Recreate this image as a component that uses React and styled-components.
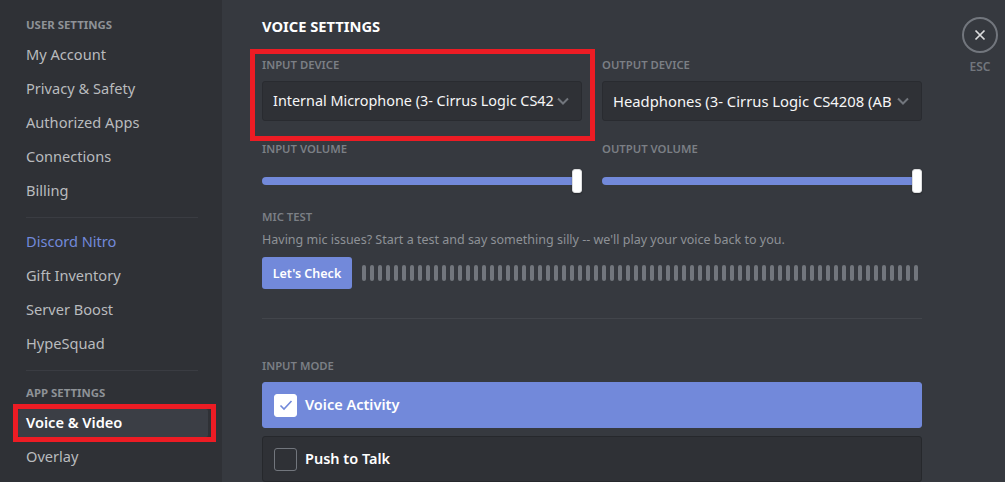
import styled, { createGlobalStyle } from "styled-components"

const GlobalStyle = createGlobalStyle`
html, body {
    margin: 0;
    height: 482px;
    overflow: hidden;
    background: #36393f;
}
* {
    box-sizing: border-box;
}
`

const Page = styled.div`
position: relative;
display: flex;
width: 1005px;
height: 482px;
overflow: hidden;
font-family: "Noto Sans", "Open Sans", sans-serif;
background: #36393f;
`

// sidebar
const Sidebar = styled.nav`
flex: 0 0 222px;
height: 482px;
padding: 18px 14px 0 18px;
background: #2f3136;
`
const SideHeading = styled.div`
height: 14px;
padding-left: 8px;
margin-bottom: 9px;
font-size: 11.4px;
line-height: 14px;
font-weight: 700;
text-transform: uppercase;
color: #8e9297;
`
const SideItem = styled.div`
height: 28px;
padding-left: 8px;
margin-bottom: 6px;
font-size: 14.6px;
line-height: 26px;
border-radius: 2px;
font-weight: ${props => props.$active ? 600 : 400};
color: ${props => props.$active ? "#ffffff" : props.$accent ? "#7289da" : "#b9bbbe"};
background: ${props => props.$active ? "#3b3e45" : "transparent"};
`
const SideDivider = styled.div`
height: 1px;
margin: 12px 10px ${props => props.$gap}px 8px;
background: #3a3c42;
`

// main column
const Main = styled.main`
flex: 0 0 660px;
margin-left: 40px;
padding-top: 17px;
`
const Title = styled.h2`
margin: 0 0 23px;
font-size: 14.7px;
line-height: 18px;
font-weight: 700;
text-transform: uppercase;
color: #ffffff;
`
const Columns = styled.div`
display: grid;
grid-template-columns: 320px 320px;
column-gap: 20px;
`
const Label = styled.div`
height: 14px;
margin-bottom: 9px;
font-size: 11.3px;
line-height: 14px;
font-weight: 600;
text-transform: uppercase;
color: #7b7f85;
`
const Select = styled.div`
display: flex;
align-items: center;
height: 40px;
padding: 0 11px 1px 10px;
margin-bottom: 21px;
border: 1px solid #292b30;
border-radius: 3px;
background: #2f3136;
`
const SelectText = styled.span`
flex: 1;
min-width: 0;
white-space: nowrap;
font-size: ${props => props.$size}px;
color: #f6f6f7;
`
const Chevron = styled.svg`
flex: 0 0 14px;
margin-left: 3px;
fill: none;
stroke: #72767d;
stroke-width: 2;
`
const Slider = styled.div`
position: relative;
height: 8px;
margin: 21px 0 25px;
border-radius: 4px;
background: #7289da;
`
const Handle = styled.div`
position: absolute;
right: 0;
top: -8px;
width: 10px;
height: 24px;
border-radius: 3px;
border: 1px solid #dcddde;
background: #ffffff;
box-shadow: 0 1px 2px rgba(0, 0, 0, .3);
`
const Description = styled.div`
height: 20px;
margin: -3px 0 7px;
font-size: 12.5px;
line-height: 20px;
white-space: nowrap;
color: #8e9297;
`
const TestRow = styled.div`
display: flex;
align-items: center;
gap: 10px;
`
const CheckButton = styled.div`
flex: 0 0 90px;
height: 32px;
border-radius: 3px;
text-align: center;
font-size: 12.5px;
line-height: 33px;
font-weight: 600;
color: #ffffff;
background: #7289da;
`
const Meter = styled.div`
display: flex;
gap: 4px;
`
const MeterBar = styled.div`
width: 4px;
height: 16px;
border-radius: 2px;
background: #72767d;
`
const Divider = styled.div`
height: 1px;
margin: 29px 0 40px;
background: #42454b;
`
const Radio = styled.div`
display: flex;
align-items: center;
gap: 8px;
height: 46px;
padding-left: 11px;
margin-bottom: 8px;
border-radius: 3px;
border: 1px solid ${props => props.$checked ? "#7289da" : "#26282c"};
background: ${props => props.$checked ? "#7289da" : "#2f3136"};
`
const RadioText = styled.span`
margin-top: -2px;
font-size: 14.5px;
font-weight: 600;
color: #ffffff;
`
const Box = styled.div`
display: flex;
align-items: center;
justify-content: center;
width: 23px;
height: 23px;
border-radius: 3px;
border: 1px solid ${props => props.$checked ? "#ffffff" : "#72767d"};
background: ${props => props.$checked ? "#ffffff" : "transparent"};
`

// esc button
const Tools = styled.div`
display: flex;
flex-direction: column;
align-items: center;
width: 36px;
margin-left: 40px;
padding-top: 17px;
`
const Close = styled.div`
display: flex;
align-items: center;
justify-content: center;
flex: 0 0 36px;
width: 36px;
height: 36px;
border-radius: 50%;
border: 2px solid #72767d;
`
const Esc = styled.div`
margin-top: 7px;
font-size: 12px;
line-height: 14px;
font-weight: 600;
color: #72767d;
`

// red marks drawn over the screenshot
const Mark = styled.div`
position: absolute;
left: ${props => props.$left}px;
top: ${props => props.$top}px;
width: ${props => props.$width}px;
height: ${props => props.$height}px;
border: 5px solid #ed1c24;
`

const userItems = ["My Account", "Privacy & Safety", "Authorized Apps", "Connections", "Billing"]
const otherItems = ["Gift Inventory", "Server Boost", "HypeSquad"]
const bars = Array.from({ length: 70 }, (_, i) => i)

const ChevronIcon = () => (
    <Chevron width="14" height="14" viewBox="0 0 14 14">
        <path d="M2 4.5l5 5 5-5" />
    </Chevron>
)

const App = () => {
    return (
        <Page>
            <GlobalStyle />
            <Sidebar>
                <SideHeading>User Settings</SideHeading>
                {userItems.map(item => <SideItem key={item}>{item}</SideItem>)}
                <SideDivider $gap={10} />
                <SideItem $accent>Discord Nitro</SideItem>
                {otherItems.map(item => <SideItem key={item}>{item}</SideItem>)}
                <SideDivider $gap={15} />
                <SideHeading>App Settings</SideHeading>
                <SideItem $active>Voice &amp; Video</SideItem>
                <SideItem>Overlay</SideItem>
            </Sidebar>
            <Main>
                <Title>Voice Settings</Title>
                <Columns>
                    <div>
                        <Label>Input Device</Label>
                        <Select>
                            <SelectText $size={14.4}>Internal Microphone (3- Cirrus Logic CS42</SelectText>
                            <ChevronIcon />
                        </Select>
                        <Label>Input Volume</Label>
                        <Slider><Handle /></Slider>
                    </div>
                    <div>
                        <Label>Output Device</Label>
                        <Select>
                            <SelectText $size={14.8}>Headphones (3- Cirrus Logic CS4208 (AB</SelectText>
                            <ChevronIcon />
                        </Select>
                        <Label>Output Volume</Label>
                        <Slider><Handle /></Slider>
                    </div>
                </Columns>
                <Label>Mic Test</Label>
                <Description>Having mic issues? Start a test and say something silly -- we'll play your voice back to you.</Description>
                <TestRow>
                    <CheckButton>Let's Check</CheckButton>
                    <Meter>
                        {bars.map(i => <MeterBar key={i} />)}
                    </Meter>
                </TestRow>
                <Divider />
                <Label>Input Mode</Label>
                <Radio $checked>
                    <Box $checked>
                        <svg width="16" height="16" viewBox="0 0 16 16" fill="none" stroke="#7289da" strokeWidth="1.6">
                            <path d="M2.5 8.5l3.5 3.5 7.5-8" />
                        </svg>
                    </Box>
                    <RadioText>Voice Activity</RadioText>
                </Radio>
                <Radio>
                    <Box />
                    <RadioText>Push to Talk</RadioText>
                </Radio>
            </Main>
            <Tools>
                <Close>
                    <svg width="12" height="12" viewBox="0 0 12 12" fill="none" stroke="#dcddde" strokeWidth="1.7">
                        <path d="M1.5 1.5l9 9M10.5 1.5l-9 9" />
                    </svg>
                </Close>
                <Esc>ESC</Esc>
            </Tools>
            <Mark $left={13} $top={404} $width={203} $height={38} />
            <Mark $left={250} $top={49} $width={345} $height={92} />
        </Page>
    )
}

export default App
